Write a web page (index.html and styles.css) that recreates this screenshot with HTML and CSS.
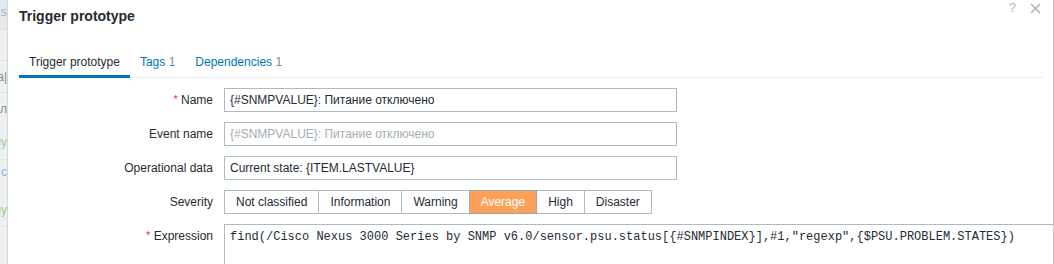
FILE: index.html
```html
<!DOCTYPE html>
<html lang="en">
<head>
  <meta charset="UTF-8" />
  <title>Trigger prototype</title>
  <link rel="stylesheet" href="styles.css">
</head>
<body>

  <aside class="behind">
    <div class="behind-row r1"><span class="t-head">Settings</span></div>
    <div class="behind-row r2"></div>
    <div class="behind-row r3"><span class="t-dark">Температура|</span></div>
    <div class="behind-row r4">
      <span class="t-dark">Питание откл</span>
      <span class="t-green">Группу</span>
    </div>
    <div class="behind-row r5">
      <span class="t-blue">• с</span>
      <span class="t-green">Группу</span>
    </div>
    <div class="behind-row r6"></div>
  </aside>

  <div class="dialog">
    <div class="dialog-head">
      <h4 class="dialog-title">Trigger prototype</h4>
      <div class="head-controls">
        <span class="btn-help">?</span>
        <svg class="btn-close" width="11" height="11" viewBox="0 0 11 11">
          <path d="M1 1 L10 10 M10 1 L1 10" stroke="#a9b6bd" stroke-width="1.6" fill="none" />
        </svg>
      </div>
    </div>

    <ul class="tabs">
      <li class="tab active">Trigger prototype</li>
      <li class="tab"><a>Tags</a> <span class="count">1</span></li>
      <li class="tab"><a>Dependencies</a> <span class="count">1</span></li>
    </ul>

    <form class="form">
      <div class="row">
        <label class="label"><span class="asterisk">*</span> Name</label>
        <input class="field" value="{#SNMPVALUE}: Питание отключено" />
      </div>
      <div class="row">
        <label class="label">Event name</label>
        <input class="field" placeholder="{#SNMPVALUE}: Питание отключено" />
      </div>
      <div class="row">
        <label class="label">Operational data</label>
        <input class="field" value="Current state: {ITEM.LASTVALUE}" />
      </div>
      <div class="row">
        <label class="label">Severity</label>
        <div class="severity">
          <span class="sev">Not classified</span>
          <span class="sev">Information</span>
          <span class="sev">Warning</span>
          <span class="sev sev-average">Average</span>
          <span class="sev">High</span>
          <span class="sev">Disaster</span>
        </div>
      </div>
      <div class="row row-top">
        <label class="label"><span class="asterisk">*</span> Expression</label>
        <textarea class="expression">find(/Cisco Nexus 3000 Series by SNMP v6.0/sensor.psu.status[{#SNMPINDEX}],#1,"regexp",{$PSU.PROBLEM.STATES})</textarea>
      </div>
    </form>
  </div>

</body>
</html>
```

FILE: styles.css
```css
html, body { margin: 0; height: 264px; overflow: hidden; }
body { display: flex; font-family: "Liberation Sans", Arial, sans-serif; font-size: 12px; color: #1f2c33; background: #fff; }

/* dimmed page behind the dialog */
.behind { width: 8px; flex: none; background: #eef1f2; border-right: 1px solid #d3d9dc; box-sizing: border-box; overflow: hidden; }
.behind-row { display: flex; flex-direction: column; align-items: flex-end; border-bottom: 1px solid #dde2e5; box-sizing: border-box; white-space: nowrap; overflow: hidden; }
.behind-row span { display: block; line-height: 14px; }
.r1 { height: 30px; padding-top: 5px; background: #e6eaec; }
.r2 { height: 31px; }
.r3 { height: 32px; padding-top: 9px; }
.r4 { height: 67px; padding-top: 9px; gap: 19px; }
.r5 { height: 67px; padding-top: 5px; gap: 24px; }
.r6 { height: 40px; border-bottom: none; }
.t-head { color: #9fb2bf; font-size: 13px; }
.t-dark { color: #7f8d95; }
.t-green { color: #9dc98a; }
.t-blue { color: #7db3da; }

.dialog { flex: 1; min-width: 0; background: #fff; border-right: 1px solid #c2cace; padding: 0 10px 0 11px; overflow: hidden; }

.dialog-head { display: flex; justify-content: space-between; height: 32px; }
.dialog-title { margin: 0; padding-top: 7px; font-size: 14px; line-height: 18px; font-weight: bold; color: #1f2c33; }
.head-controls { display: flex; align-items: center; gap: 14px; height: 14px; padding-top: 1px; margin-right: 2px; }
.btn-help { color: #a9b6bd; font-size: 13px; line-height: 14px; }
.btn-close { display: block; }

.tabs { list-style: none; display: flex; margin: 15px 0 0; padding: 0; border-bottom: 1px solid #ebeef0; }
.tab { position: relative; padding: 7px 10px; line-height: 16px; color: #1f2c33; }
.tab a { color: #0275b8; }
.tab .count { color: #768d99; }
.tab.active::after { content: ""; position: absolute; left: 0; right: 0; bottom: -1px; height: 3px; background: #0275b8; }

.form { padding-top: 10px; }
.row { display: flex; align-items: center; margin-bottom: 10px; }
.row-top { align-items: flex-start; }
.label { width: 205px; flex: none; padding-right: 11px; box-sizing: border-box; text-align: right; line-height: 24px; }
.asterisk { color: #e33734; font-size: 11px; position: relative; top: -1px; }

.field { width: 453px; height: 24px; box-sizing: border-box; border: 1px solid #acbbc2; padding: 0 5px; font-family: "Liberation Sans", Arial, sans-serif; font-size: 12px; color: #1f2c33; outline: none; }
.field::placeholder { color: #a3adb2; }

.severity { display: flex; }
.sev { height: 24px; box-sizing: border-box; line-height: 22px; padding: 0 11px; border: 1px solid #acbbc2; margin-left: -1px; color: #1f2c33; background: #fff; }
.sev:first-child { margin-left: 0; }
.sev-average { background: #ffa059; color: #fff; border-color: #9aa8b0; position: relative; }

.expression { width: 860px; flex: none; height: 60px; box-sizing: border-box; border: 1px solid #acbbc2; padding: 4px 5px; margin: 0; font-family: "Liberation Mono", "Courier New", monospace; font-size: 12px; line-height: 16px; color: #1f2c33; resize: none; outline: none; }
```
